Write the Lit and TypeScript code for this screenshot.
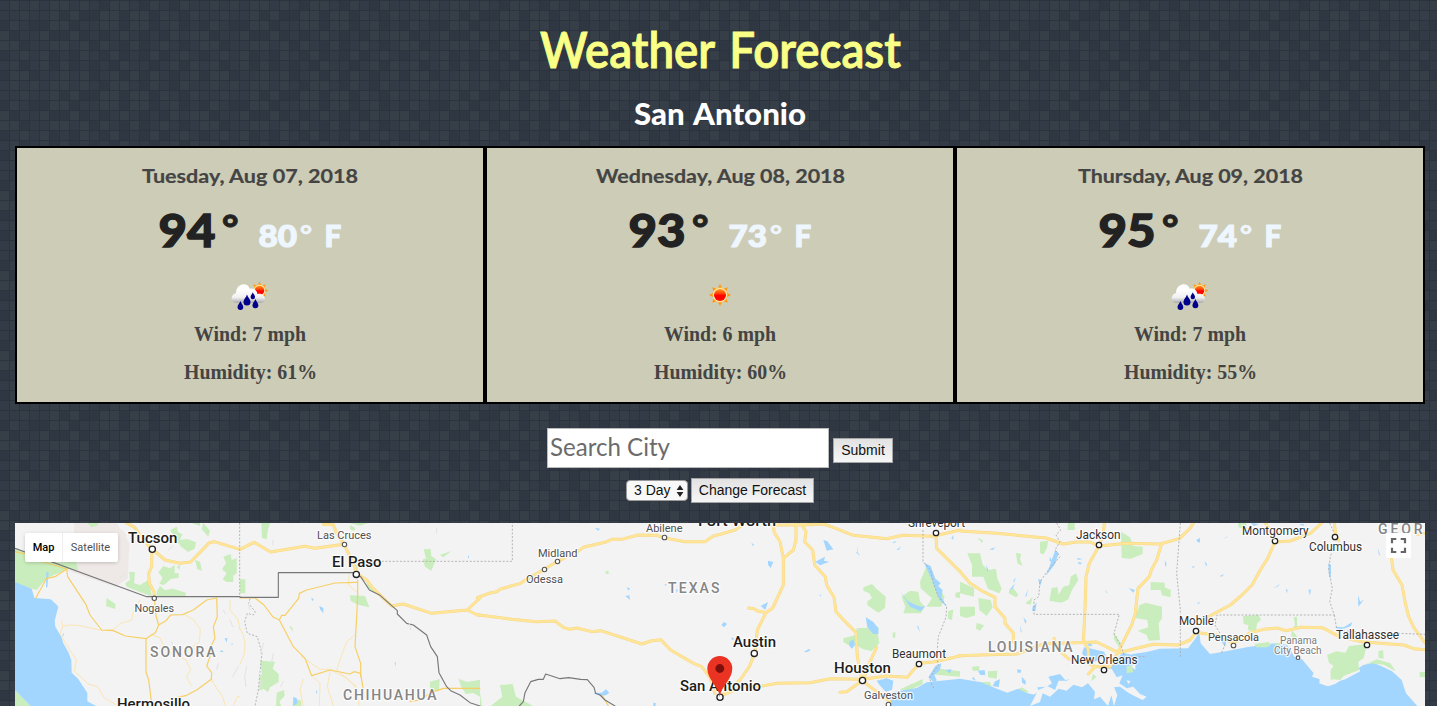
import { LitElement, html, svg, css, unsafeCSS } from "lit";
import { customElement } from "lit/decorators.js";

/* ---------- page background: a woven tile of 20 x 8 squares ---------- */
const WEAVE = [
  "mlmlmllmlmdllmdlmdlm",
  "mmlmmldlddlldlldlmdl",
  "dlmddlldmmlldlldmldm",
  "ldmmlddldmdmlmdmdlml",
  "lldmmllmldlmdldmlmdm",
  "dmlmldmdlmdldmdldmlm",
  "mldmldldmdmdlmmdmldl",
  "dlldmmlmldmldldlmdml",
];
const TONE: Record<string, string> = { d: "%232f3742", m: "%23333b46", l: "%23363e48" };
const weaveTile =
  "<svg xmlns='http://www.w3.org/2000/svg' width='200' height='80'><rect width='200' height='80' fill='%232c333f'/>" +
  WEAVE.map((row, r) =>
    [...row].map((c, i) => `<rect x='${i * 10}' y='${r * 10 + 1}' width='9' height='9' fill='${TONE[c]}'/>`).join(""),
  ).join("") +
  "</svg>";
const weave = unsafeCSS(`url("data:image/svg+xml,${weaveTile}")`);

/** A line of type set to an exact measure. */
const line = (text: string, w: number, h: number, y: number, cls: string) => html`
  <svg class="line ${cls}" width=${w} height=${h}>
    <text x="0" y=${y} textLength=${w} lengthAdjust="spacingAndGlyphs">${text}</text>
  </svg>`;

/* ---------- map data: [class, x origin, path] in thirds of a pixel ---------- */
type Shape = [string, number, string];

const LAND: Shape[] = [
  ["sand", 0, "M222 39H350L388 100L384 205L345 230L190 178L222 110Z"],
  ["green", 0, "M45 118L160 158L228 155L235 180L205 176L140 205L110 240L96 236L45 218Z"],
  ["green", 0, "M262 39H294V46L275 52ZM45 540L92 588H45ZM105 545L125 549L133 572L126 585L100 565Z"],
  ["green", 0, "M320 264L346 282V297L318 288Z"],
  ["green", 0, "M388 185L405 187L402 220L420 225L446 209L456 260L380 230L376 220L390 210Z"],
  ["green", 0, "M475 187L490 168L510 175L524 165V190L536 190V203L513 207L492 225L478 222L488 203ZM530 170L541 165L538 181ZM470 245L480 228L495 240L520 236L557 248V258H470Z"],
  ["green", 0, "M510 60L530 50L534 67L548 73L538 92L548 108L535 100L520 75ZM536 90L562 87L588 97L584 116L564 126L540 107ZM585 150L600 155L606 182L592 178ZM670 140L692 132L695 150L710 145V190L700 197V216H680L668 208L680 190L666 178L678 160ZM610 39L630 62L625 80L605 58ZM575 39H600V48Z"],
  ["green", 240, "M64 39H90L83 62L80 88L66 84ZM328 39H384L360 47ZM330 46L346 54L343 62L330 58ZM0 208H16V250H0Z"],
  ["green", 240, "M551 118L572 117L574 138L588 148L574 182L555 170L549 148L558 146ZM600 135L634 123L610 142Z"],
  ["green", 240, "M330 256L375 258L388 292L354 284L332 273ZM378 218L432 262L425 262L384 234ZM340 158L355 168L350 190L343 190ZM147 347L158 353V365Z"],
  ["green", 240, "M60 452L105 455L98 476L116 492V516L90 532L84 546L70 536L58 542V502L66 492ZM110 548L132 540L134 557L118 575L124 588H108ZM160 565L184 572V588H158Z"],
  ["green", 240, "M570 515L599 507L597 542H570ZM655 506L680 516L720 509V560L700 549L678 552L665 533Z"],
  ["green", 480, "M60 525L98 522L108 560L160 588H32L67 560ZM0 548L6 588H0ZM376 184L386 183V192H378Z"],
  ["green", 720, "M430 232L456 222L469 236L497 260L495 294L475 308L442 286V274L456 265L448 250L430 242ZM545 260L570 242L595 245L600 274L614 290L602 310H550L556 290ZM600 215L620 168L640 190L655 232L674 260L664 290H620L636 265L602 235ZM706 249L720 245V264L706 262ZM684 304L700 298L696 330L684 326Z"],
  ["green", 720, "M370 385L408 375L410 355L476 352L474 374L478 400L455 423L430 418L398 400L386 406L370 396ZM518 368L526 366V383H518ZM540 538L608 507V522L560 545ZM646 475L720 484V500L646 494Z"],
  ["green", 960, "M22 130H60L68 164L84 180L108 176L112 205L125 236L118 250L84 236L70 200H36L36 165ZM0 215L42 234V260L0 250ZM55 264L92 270L98 292L80 318L58 300ZM0 290H45V316L20 324L0 318ZM50 338L72 346L60 362L48 356ZM168 128L184 132L180 148L188 168L172 160ZM148 240L160 234L175 255L168 262L146 250ZM52 82L70 92L65 98ZM240 95L264 92L262 110L250 134L240 128ZM323 39H344V60H323ZM196 280L218 262L212 284Z"],
  ["green", 960, "M275 234L293 232L295 254L310 230L328 225L332 200L348 190L355 210L336 240L325 268L305 278L268 272ZM483 65L510 82L520 108L548 110V132L512 146L485 144ZM572 216L614 218V232L632 240V262L606 256L602 240H572ZM538 286L556 278L606 290V325L596 340L600 390L566 392L560 375L533 362L565 352L562 330L525 324Z"],
  ["green", 960, "M460 365L482 400L478 412L462 388ZM84 484L112 482L110 506L84 502ZM36 470L58 468V482H38ZM500 468L518 470V494L500 490ZM54 516H90L96 535L55 524ZM168 540L186 532L205 545L190 556Z"],
  ["green", 1197, "M138 318L185 315L192 330L180 340L177 364L152 360L154 345L140 342ZM290 322L300 320L300 356L285 362L298 376L302 395L283 390L284 360L294 345ZM124 39H148V58L124 52Z"],
];

const WATER: Shape[] = [
  ["water", 0, "M45 216L95 236L103 264L152 268L170 284L175 290L164 332L166 350L184 380L190 400L206 428L214 450L215 488L234 506L262 548V574L288 588H92L45 540Z"],
  ["water", 720, "M470 512L500 505L520 512L516 540L497 545L478 524ZM505 570L520 546L590 534L620 517L720 506L780 516L850 544L862 548L895 536L918 548L942 554L965 588H500Z"],
  ["water", 960, "M198 588L215 576L206 562L236 546L232 532L260 530L276 520L265 500L300 492L316 510L352 505L368 525L405 500L392 486L432 470L455 468L470 446L488 428L515 434L518 432L560 426L600 416L684 415L700 394L718 368L722 400L750 432L790 425L860 412L905 405L955 398L1000 410L1045 452L1080 490L1078 520L1100 528L1125 522L1160 498L1210 465L1240 458L1268 470L1296 484L1325 510L1338 550L1372 588Z"],
  ["water", 960, "M366 430L372 412L395 416L432 425L438 438L390 462ZM382 400L390 398L398 408H386Z"],
];

const GULF_LAND: Shape[] = [
  ["land", 960, "M210 588L235 540L262 528L285 540L296 512L320 512L352 495L376 498L398 474L455 476L470 502L488 496L478 520L500 535L520 530L540 552L560 560L548 570L523 558L505 548L480 530L462 532L472 555L462 588L454 556L444 588L420 560L402 568L405 545L384 520L366 532L340 524L320 542L296 536L270 560L248 550L240 576Z"],
  ["land", 960, "M512 468L526 462V480ZM500 510L512 514L505 522Z"],
  ["green", 960, "M398 492L410 500L394 514ZM500 468L516 468L520 486L500 490Z"],
  ["land", 1197, "M55 392L150 388L265 395L292 440L315 448L350 490L345 500L370 508L372 520L398 528L430 512L445 508L490 484L450 400H60Z"],
  ["green", 1197, "M390 435L418 424L445 428L456 408L510 402L500 445L484 455L486 480L440 498L430 510L408 508L401 510V480L410 468L396 458ZM544 424L558 420L560 446L545 444ZM503 464L540 448L580 460L596 484L560 464L520 460ZM668 486H684V501H668ZM172 402L215 396L222 406L210 412H178ZM226 402L250 398L246 406Z"],
  ["water", 480, "M345 54L360 56L354 62ZM440 232L450 235L446 242ZM436 258L448 256L450 270ZM340 548H365L378 538L388 548L378 556L362 558L345 552ZM520 578L528 580L526 588H520ZM553 223L560 222L558 228ZM588 237L594 240L590 248Z"],
  ["water", 720, "M310 90L322 94L340 118L320 122ZM286 155L315 140L312 152L328 155L300 166ZM404 124L412 128V106L414 128L420 138ZM144 152L160 156L152 174L144 164ZM94 98L103 104L98 107ZM4 345L12 336L21 342L12 352ZM122 288L144 276L136 300ZM252 425L268 416L270 422L258 427ZM542 245L562 272L585 284L604 290L616 288L602 304L570 290ZM612 158L632 168L645 205L662 220L654 228L668 240L665 262L680 290L658 270L640 220ZM437 322L460 336L475 355V372L460 372L442 352ZM388 395L400 388L405 405L396 416L388 408ZM594 345L600 366L592 352ZM646 468L664 460L660 480L643 495L650 510L645 520L625 502ZM676 480L695 478L690 490ZM516 98L530 92L524 99ZM530 120L543 108L536 120ZM700 75V90L694 85ZM298 258L304 251L302 259ZM34 382L44 386L36 390Z"],
  ["water", 960, "M88 118L106 112L98 120ZM78 162L86 182L82 186ZM352 156L366 158L360 164ZM350 144L368 147L356 150ZM160 212L168 202L162 218ZM148 240L165 220L158 236ZM195 260L204 238L200 258ZM218 290L230 278L226 304L216 302ZM234 206L246 212L240 228ZM286 120L296 130L285 162L264 190L258 196L268 170ZM270 140L276 154H268ZM435 240L444 250L438 247ZM614 150L620 162L616 172ZM506 234L525 240L520 248ZM190 322L200 334L196 342ZM180 345L186 368L182 364ZM54 482L74 480L76 496L60 494ZM40 500L48 512L36 506ZM172 478L184 480L182 488H172ZM185 500L197 512V524L186 518ZM105 514L120 508L116 532L98 528ZM694 170L704 168L700 174ZM708 90L720 84V98Z"],
  ["water", 1197, "M228 236L248 222L244 228ZM266 236L272 240L270 250ZM334 240L342 238L339 256ZM483 256L490 276L502 268L484 290ZM394 160L402 164V190L400 208L396 196ZM543 114L550 138L545 132ZM417 350L440 352L466 336L462 348L430 360L415 354ZM78 86L94 78L90 82ZM162 39L186 42L170 48ZM68 198L82 192L74 200ZM22 154L30 162L28 170ZM0 278L10 277L4 282ZM0 94L8 90L4 98ZM68 385L90 388L84 410L74 396ZM306 42H320V48Z"],
  ["water", 0, "M139 185L146 188L142 230L138 234ZM190 368L192 374L186 382ZM664 420L672 426L660 426ZM674 385L682 384L680 398ZM690 402L700 401L698 404Z"],
  ["water", 240, "M214 263L222 268L216 274ZM238 288L250 294V310L240 298ZM464 457L468 458L466 470ZM160 560L170 565L172 580L160 588ZM228 540L232 545L228 552ZM684 136L687 137V145L684 143Z"],
];

const ROADS: Shape[] = [
  // thin local roads
  ["faint", 0, "M185 332L188 350L208 345L235 346L308 362L340 358L362 340L395 330L398 312L420 270M188 350L180 372L200 405L230 452L222 482L265 522L292 530L314 565L355 588M452 372L480 384L497 420L520 430L558 450L572 478L560 500L575 528M555 314L580 330L601 358L598 395L560 425M690 270V300L714 328L720 360M676 588L668 560L640 520L634 505M700 588L712 560H720"],
  ["faint", 240, "M0 355Q22 390 12 435L0 462M328 190L325 225L350 245M270 478L320 505L345 530L358 588M345 375L320 395L300 450L290 480L350 530M190 508L180 540L190 588M218 500L240 520L238 588M270 485L262 530L280 588M185 440L240 478L270 478"],
  // regional roads
  ["trunk", 0, "M107 265L140 205L165 200L200 177L203 200L258 284L270 315L305 360L340 362L376 378L438 386V486L446 510L456 588M463 265L468 318L476 345L466 368L438 386M476 345L498 332L512 315L548 314L580 300L620 270L650 264L652 320L640 350L645 385L632 410L630 440L620 468L635 488L634 508L590 540L560 556L520 565M45 125L80 133M130 156L200 177"],
  ["trunk", 240, "M0 264H45L72 285L98 320L118 330L160 410L195 445L215 497L270 480L330 492L342 485L362 490L370 540M118 330L125 316H135L176 265L178 250L200 240L285 219L350 217M353 210V255L350 320L345 410L362 460V500M720 535H610L572 548L540 570L510 574"],
  ["trunk", 480, "M368 558L385 588"],
  // motorways
  ["road", 0, "M380 39L404 52L430 90L456 118L455 170L446 190L448 220L462 245L463 262M458 118L495 150L540 160L572 156L628 98L642 95L720 118"],
  ["road", 240, "M0 118L42 97L92 126L195 109L225 115L313 103M250 43L280 44L290 70L313 104L340 162L352 192L380 210L400 236L455 288L490 282L575 310L682 300L720 264M682 300L712 315H720"],
  ["road", 480, "M-8 263L30 249L50 245L62 237L122 220L140 208L193 178L233 154L297 122L310 112L378 96L395 88L425 88L474 75L530 76L555 84L615 95H675L700 78L720 73M-8 314L95 328L170 335L225 333L250 352L270 358L290 354L335 365L362 362L486 402L512 393L542 389L572 420L620 448L640 460L665 470L690 502L705 550"],
  ["road", 720, "M0 73L45 60L68 45M160 39L162 65L180 95L190 145V225L158 294L138 308L112 360L104 430L88 470L60 510L2 560M228 39V90L220 120L190 145M155 45H245M86 294L102 296L110 302L138 308M242 39L258 65L254 95L278 120L284 165L316 200L320 225L342 262L348 305L366 325L408 368L412 440L426 510M250 45L310 42L340 52L400 76L500 86L548 76L640 79L720 60M470 412L450 455L430 510M0 560L65 530L125 528L172 520L270 518L330 506L428 508L500 498L562 502L598 460L640 456L720 438M360 547L380 545L426 512L510 575M648 72L650 115L690 155L720 184"],
  ["road", 960, "M0 63L110 70L258 84L310 102L350 96H390L417 108L500 100L600 102L658 86L690 55L700 39M433 39L430 70L417 108L388 160L378 200L375 300L370 395L384 415L386 446M-4 180L30 220L70 245L105 262V290L135 325V340L160 370V395M-4 437L85 434L170 432L250 402L280 400L305 400L410 396L475 428L580 403L655 405L690 390L708 368M282 385L283 400L305 428L325 446L385 460L405 470L450 470L472 430L515 345L526 310L530 270L534 235L568 200L574 180L590 150L604 104M385 492L405 470"],
  ["road", 1197, "M0 368L60 375L110 400L160 368L200 358L240 354L266 362L312 352L376 353L420 376L455 386L500 396L550 400L620 405L650 416L684 419M35 320L100 285L135 255L165 225L190 180L212 145L234 96L280 93L340 70L374 39M205 39L220 60L234 94M412 39L416 75L425 92M583 140L588 180L615 225L625 280L635 320L652 355L684 398M660 73L684 70"],
];

const BORDERS: Shape[] = [
  ["nation", 0, "M45 115L440 260H720"],
  ["nation", 240, "M0 262H115V188H345L362 200L388 240L420 256L472 302V312L500 340L520 345L560 375L572 410L592 440L597 488L620 530L632 542L660 555L690 578L720 588"],
  ["nation", 480, "M118 588L130 575L135 548L152 515L175 508H190L197 492L240 506L266 503L302 508L322 509L342 532L347 550L360 555L375 570L405 588"],
  ["state", 0, "M719 39V260"],
  ["state", 240, "M425 154H817V39"],
  ["state", 240, "M30 266L26 280L46 306L40 315L22 310L14 335L22 370L52 380L66 430L60 485L55 540L45 588"],
  ["state", 720, "M609 60V155L632 180L640 220L655 260L680 288L678 322L655 380L650 440L655 465L628 505L641 535"],
  ["state", 960, "M290 39L302 60L288 75L300 95L285 120L300 140L265 180L240 215L236 260L222 270V313H478L462 370L482 405L494 440H560M661 39L650 190L661 300V440"],
  ["state", 1197, "M74 428L86 398L54 345L60 315H412L398 275L406 235L395 180L400 140L408 115M398 39L412 70M412 315L420 362L500 366L684 373"],
  ["creek", 0, "M715 470L698 500M655 460L650 478M690 330L698 350M515 395L520 415M360 205L374 190M505 120L520 108M365 60L378 78M670 300L676 312"],
  ["creek", 240, "M70 400L62 430M100 430L94 460M20 470L14 500L18 530M130 515L122 530M60 510L66 540M25 280L30 300M100 90L98 104M508 340L512 360M590 55V70"],
];

/* [text, x, baseline, length, class] */
type Label = [string, number, number, number, string];
const LABELS: Label[] = [
  ["Tucson", 128, 543, 49.5, "big"], ["Nogales", 134.5, 612, 39.5, "small"], ["SONORA", 150, 657, 65.5, "region"],
  ["Hermosillo", 117, 708.5, 73, "big"], ["Las Cruces", 317, 539, 54.5, "small"], ["El Paso", 332, 567.4, 49.5, "big"],
  ["CHIHUAHUA", 343, 700, 93.5, "region"], ["Abilene", 646, 532, 36.5, "small"], ["Fort Worth", 698, 526, 78, "big"],
  ["Midland", 538, 557, 39.5, "small"], ["Odessa", 526, 583, 37, "small"], ["TEXAS", 668, 593, 51.5, "region"],
  ["San Antonio", 680, 691, 81, "big"], ["Austin", 733, 647, 43, "big"], ["Houston", 834, 673, 57, "big"],
  ["Beaumont", 892, 658, 54, "mid"], ["Galveston", 864, 699, 49, "small"], ["Shreveport", 908, 527, 57, "mid"],
  ["Jackson", 1076, 539, 44.5, "mid"], ["LOUISIANA", 988, 652, 84.5, "region"], ["New Orleans", 1071, 664, 66.5, "mid"],
  ["Mobile", 1179, 625, 35, "mid"], ["Montgomery", 1242, 535, 66.5, "mid"], ["Columbus", 1309, 551, 53, "mid"],
  ["GEORGIA", 1378, 533.8, 76, "region"], ["Pensacola", 1208, 641, 51, "mid2"], ["Panama", 1280, 643.8, 37, "pale"],
  ["City Beach", 1274, 653.8, 47.5, "pale"], ["Tallahassee", 1336, 639, 63, "mid"],
];

/* [x, y, radius] */
const TOWNS: [number, number, number][] = [
  [152.3, 549.3, 3.1], [154.3, 598.3, 2.2], [344.5, 544.5, 2.2], [356.3, 574.4, 3.1], [664.5, 537.5, 2.3],
  [557.5, 561.5, 2.2], [544.5, 569.5, 2.2], [720, 697.3, 3.1], [754.3, 653.4, 3.1], [862.5, 680.5, 3.1],
  [919, 664, 2.7], [888.5, 704.5, 2.3], [936, 533, 2.7], [1099, 545, 2.7], [1104, 670, 2.7], [1196, 631, 2.7],
  [1275, 541, 2.7], [1335, 537, 2.7], [1233.5, 645.5, 2.3], [1298, 657.7, 1.8], [1367, 645, 2.7],
];

@customElement("weather-icon")
class WeatherIcon extends LitElement {
  static properties = { kind: {} };
  declare kind: string;
  static styles = css`
    :host { display: block; height: 50px; width: 50px; }
    svg { display: block; overflow: visible; }
  `;
  private sun(cx: number, cy: number, s: number) {
    return svg`<g transform="translate(${cx} ${cy}) scale(${s})">
      ${[0, 45, 90, 135, 180, 225, 270, 315].map(
        (a) => svg`<path d="M-2.2 -6.6L0 -11.3L2.2 -6.6Z" fill="#ff9410" transform="rotate(${a})"/>`)}
      <circle r="7.6" fill="#ffd35a"/><circle r="7" fill="#fff0c0"/><circle r="6.1" fill="url(#sun)"/>
    </g>`;
  }
  private drop(x: number, y: number, s: number) {
    return svg`<path transform="translate(${x} ${y}) scale(${s})" d="M0 -5C.6 -2.6 3.2 -.8 3.2 1.8A3.2 3.2 0 0 1 -3.2 1.8C-3.2 -.8 -.6 -2.6 0 -5Z" fill="#00008c"/>`;
  }
  render() {
    return html`<svg width="50" height="50" viewBox="0 0 50 50">
      <defs>
        <linearGradient id="sun" x2="0" y2="1"><stop offset="0" stop-color="#ff9a20"/><stop offset=".4" stop-color="#ff3a08"/><stop offset=".55" stop-color="#ff0000"/><stop offset="1" stop-color="#ff0a00"/></linearGradient>
        <linearGradient id="cloud" x2="0" y2="1"><stop offset=".3" stop-color="#fff"/><stop offset=".7" stop-color="#f0f0f0"/><stop offset="1" stop-color="#aaa"/></linearGradient>
      </defs>
      ${this.kind === "sun"
        ? this.sun(25, 25, 0.98)
        : svg`${this.sun(34.5, 20.5, 0.78)}
          <path d="M11.5 33C8 33 6.3 30.6 6.6 28C6.9 25.5 8.6 23.6 11 23C11 18 14.5 14.2 18.6 14.2C21.8 14.2 24 16.2 24.8 18.8C28.5 17.6 31.8 20 32.4 24C36.5 23 40 25.5 40 28.5C40 31.5 38 33 35 33Z" fill="url(#cloud)"/>
          ${this.drop(15.4, 35.4, 0.9)}${this.drop(22, 30, 1.1)}${this.drop(27.8, 25.8, 0.7)}${this.drop(30.4, 33.7, 0.93)}`}
    </svg>`;
  }
}

@customElement("forecast-map")
class ForecastMap extends LitElement {
  static styles = css`
    :host { display: block; position: relative; height: 183px; overflow: hidden; background: #f3f3f3; font-family: Roboto, sans-serif; }
    .canvas { display: block; }
    .sand { fill: #eee9e6; }
    .green { fill: #c9edbc; }
    .water { fill: #a2d6ff; }
    .land { fill: #f3f3f3; }
    .case, .road, .trunk, .faint, .nation, .state, .creek { fill: none; stroke-linejoin: round; stroke-linecap: round; }
    .case { stroke: #f7d683; stroke-width: 9; }
    .road { stroke: #ffe597; stroke-width: 6.5; }
    .trunk { stroke: #f6cf66; stroke-width: 3.6; }
    .faint { stroke: #fbe3a8; stroke-width: 2.6; }
    .nation { stroke: #777; stroke-width: 3.4; }
    .state { stroke: #aaa; stroke-width: 2.6; stroke-dasharray: 6 5; stroke-linecap: butt; }
    .creek { stroke: #e2e2e2; stroke-width: 3; }
    .town { fill: #fff; stroke: #222; stroke-width: 1.3; }
    .town.minor { stroke: #555; stroke-width: 1.1; }
    text { paint-order: stroke; stroke: #fff; stroke-opacity: .8; stroke-width: 2.4px; stroke-linejoin: round; }
    .big { font-size: 14.5px; font-weight: 500; fill: #1c1c1c; }
    .mid { font-size: 12px; fill: #303030; }
    .mid2 { font-size: 11.5px; fill: #404040; }
    .small { font-size: 11.2px; fill: #505050; }
    .pale { font-size: 10.5px; fill: #7d7d7d; }
    .region { font-size: 14px; font-weight: 500; fill: #858585; }
    .types { position: absolute; left: 10px; top: 10px; display: flex; height: 29px; background: #fff; border-radius: 2px; box-shadow: 0 1px 4px -1px rgba(0,0,0,.3); font-size: 11px; line-height: 29px; }
    .type { box-sizing: border-box; text-align: center; width: 55px; color: #505050; }
    .type.on { width: 38px; color: #000; font-weight: 500; border-right: 1px solid #eee; }
    .full { position: absolute; right: 14px; top: 10px; width: 25px; height: 25px; background: #fff; }
    .full svg { display: block; }
  `;
  private draw(shapes: Shape[], cls?: string) {
    return shapes.map(([c, x, d]) => svg`<path class=${cls ?? c} transform="translate(${x * 3} 0)" d=${d}/>`);
  }
  render() {
    return html`
      <svg class="canvas" width="1410" height="183" viewBox="15 523 1410 183">
        <g transform="translate(0 510) scale(.333333)">
          ${this.draw(LAND)}${this.draw(WATER)}${this.draw(GULF_LAND)}
          ${this.draw(ROADS.filter((r) => r[0] !== "road"))}
          ${this.draw(ROADS.filter((r) => r[0] === "road"), "case")}
          ${this.draw(ROADS.filter((r) => r[0] === "road"))}
          ${this.draw(BORDERS)}
        </g>
        ${TOWNS.map(([x, y, r]) => svg`<circle class=${r < 2.5 ? "town minor" : "town"} cx=${x} cy=${y} r=${r}/>`)}
        ${LABELS.map(([t, x, y, w, c]) => svg`<text class=${c} x=${x} y=${y} textLength=${w} lengthAdjust=${c === "region" ? "spacing" : "spacingAndGlyphs"}>${t}</text>`)}
        <path d="M719.8 697C718.8 686 707.3 680 707.3 668.5A12.5 12.5 0 0 1 732.3 668.5C732.3 680 720.8 686 719.8 697Z" fill="#ea3323"/>
        <circle cx="719.8" cy="668.5" r="4.4" fill="#7c0f0b"/>
      </svg>
      <div class="types"><div class="type on">Map</div><div class="type">Satellite</div></div>
      <div class="full"><svg width="25" height="25"><path d="M6 10.3V6H10.3M14.7 6H19V10.3M19 14.7V19H14.7M10.3 19H6V14.7" fill="none" stroke="#666" stroke-width="2.2"/></svg></div>`;
  }
}

interface Day { date: string; dateWidth: number; high: string; low: string; sky: string; wind: number; humidity: number; }
const DAYS: Day[] = [
  { date: "Tuesday, Aug 07, 2018", dateWidth: 216, high: "94", low: "80", sky: "rain", wind: 7, humidity: 61 },
  { date: "Wednesday, Aug 08, 2018", dateWidth: 249, high: "93", low: "73", sky: "sun", wind: 6, humidity: 60 },
  { date: "Thursday, Aug 09, 2018", dateWidth: 225, high: "95", low: "74", sky: "rain", wind: 7, humidity: 55 },
];

@customElement("app-root")
class AppRoot extends LitElement {
  static styles = css`
    :host { display: block; box-sizing: border-box; height: 706px; overflow: hidden; padding: 0 12px 0 15px; background: ${weave}; font-family: Lato, sans-serif; }
    .line { display: block; overflow: visible; }
    h1, h2, h3, p { margin: 0; font-size: inherit; font-weight: inherit; display: flex; justify-content: center; }
    h1 { height: 90px; }
    h2 { height: 56px; }
    .title { font-size: 49px; font-weight: 600; fill: #faff86; stroke: #faff86; stroke-width: .9px; word-spacing: 4px; }
    .city { font-size: 31px; font-weight: 900; fill: #fff; word-spacing: 2px; }
    .days { display: grid; grid-template-columns: repeat(3, 1fr); }
    .day { box-sizing: border-box; height: 258px; border: 2px solid #000; background: #cdccb6; display: flex; flex-direction: column; align-items: center; }
    .date { font-size: 19.5px; font-weight: 700; fill: #444; stroke: #444; stroke-width: .2px; }
    .temps { display: block; overflow: visible; font-weight: 900; }
    .high { font-size: 45px; fill: #222; stroke: #222; stroke-width: 1.3px; }
    .high.ring { font-size: 36px; stroke-width: .8px; }
    .low { font-size: 29.5px; fill: #eef6ff; stroke: #eef6ff; stroke-width: 1.2px; }
    .low.ring { font-size: 25px; stroke-width: .5px; }
    .fact { font: bold 20px "Liberation Serif", serif; fill: #444; }
    .row { display: flex; justify-content: center; }
    .search { gap: 4px; margin-top: 24px; align-items: flex-start; }
    .choose { gap: 3px; margin-top: 10px; margin-bottom: 20px; }
    .field { box-sizing: border-box; width: 282px; height: 40px; background: #fff; border: 1px solid #bbb; padding-left: 2px; }
    .hint { font-size: 25.5px; fill: #6b6b6b; }
    .button { box-sizing: border-box; height: 25px; padding: 0; border: 1px solid #a6a6a6; background: linear-gradient(#e2e2e2, #f6f6f6); font: 14px/23px "Liberation Sans", sans-serif; color: #111; text-align: center; }
    .submit { width: 60px; margin-top: 10px; }
    .change { width: 123px; }
    .select { box-sizing: border-box; width: 62px; height: 21px; margin-top: 2px; border: 1px solid #9a9a9a; border-radius: 4px; background: #f8f8f8; padding-left: 7px; display: flex; align-items: center; gap: 5px; font: 14px/19px "Liberation Sans", sans-serif; color: #111; white-space: nowrap; }
    .arrows { display: block; }
  `;
  render() {
    return html`
      <h1>${line("Weather Forecast", 361, 90, 67.7, "title")}</h1>
      <h2>${line("San Antonio", 172, 56, 34.6, "city")}</h2>
      <section class="days">
        ${DAYS.map((d) => html`
          <article class="day">
            <h3>${line(d.date, d.dateWidth, 38, 35, "date")}</h3>
            <svg class="temps" width="182" height="84">
              <text class="high" x="-0.5" y="60.7" textLength="57" lengthAdjust="spacingAndGlyphs">${d.high}</text>
              <text class="high ring" x="63" y="54.5" textLength="16.5" lengthAdjust="spacingAndGlyphs">°</text>
              <text class="low" x="99.5" y="60.7" textLength="38.5" lengthAdjust="spacingAndGlyphs">${d.low}</text>
              <text class="low ring" x="141" y="57.5" textLength="12" lengthAdjust="spacingAndGlyphs">°</text>
              <text class="low" x="165.5" y="60.7">F</text>
            </svg>
            <weather-icon .kind=${d.sky}></weather-icon>
            <p>${line(`Wind: ${d.wind} mph`, 112, 38, 21, "fact")}</p>
            <p>${line(`Humidity: ${d.humidity}%`, 133, 28, 21, "fact")}</p>
          </article>`)}
      </section>
      <div class="row search">
        <div class="field">${line("Search City", 120, 38, 26.8, "hint")}</div>
        <button class="button submit">Submit</button>
      </div>
      <div class="row choose">
        <div class="select">3 Day<svg class="arrows" width="8" height="14"><path d="M4 1L7.4 6H.6ZM4 13L.6 8H7.4Z" fill="#222"/></svg></div>
        <button class="button change">Change Forecast</button>
      </div>
      <forecast-map></forecast-map>`;
  }
}
